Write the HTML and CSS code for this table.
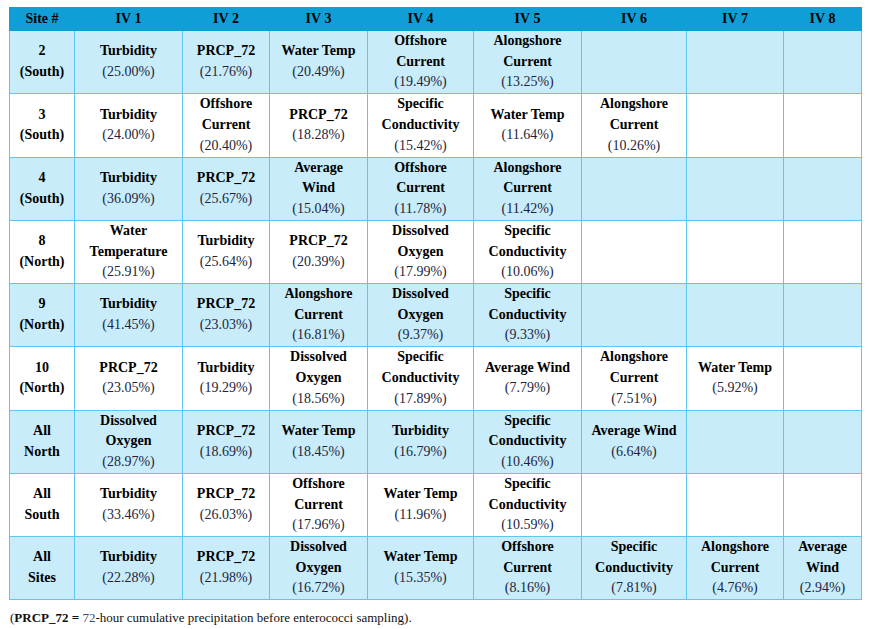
FILE: index.html
```html
<!DOCTYPE html>
<html>
<head>
<meta charset="utf-8">
<link rel="stylesheet" href="styles.css">
</head>
<body>
<table class="grid">
<colgroup>
<col class="c0"><col class="c1"><col class="c2"><col class="c3"><col class="c4"><col class="c5"><col class="c6"><col class="c7"><col class="c8">
</colgroup>
<thead>
<tr><th>Site #</th><th>IV 1</th><th>IV 2</th><th>IV 3</th><th>IV 4</th><th>IV 5</th><th>IV 6</th><th>IV 7</th><th>IV 8</th></tr>
</thead>
<tbody>
<tr class="shade">
<td><b>2<br>(South)</b></td>
<td><b>Turbidity</b><br>(25.00%)</td>
<td><b>PRCP_72</b><br>(21.76%)</td>
<td><b>Water Temp</b><br>(20.49%)</td>
<td><b>Offshore<br>Current</b><br>(19.49%)</td>
<td><b>Alongshore<br>Current</b><br>(13.25%)</td>
<td></td><td></td><td></td>
</tr>
<tr>
<td><b>3<br>(South)</b></td>
<td><b>Turbidity</b><br>(24.00%)</td>
<td><b>Offshore<br>Current</b><br>(20.40%)</td>
<td><b>PRCP_72</b><br>(18.28%)</td>
<td><b>Specific<br>Conductivity</b><br>(15.42%)</td>
<td><b>Water Temp</b><br>(11.64%)</td>
<td><b>Alongshore<br>Current</b><br>(10.26%)</td>
<td></td><td></td>
</tr>
<tr class="shade">
<td><b>4<br>(South)</b></td>
<td><b>Turbidity</b><br>(36.09%)</td>
<td><b>PRCP_72</b><br>(25.67%)</td>
<td><b>Average<br>Wind</b><br>(15.04%)</td>
<td><b>Offshore<br>Current</b><br>(11.78%)</td>
<td><b>Alongshore<br>Current</b><br>(11.42%)</td>
<td></td><td></td><td></td>
</tr>
<tr>
<td><b>8<br>(North)</b></td>
<td><b>Water<br>Temperature</b><br>(25.91%)</td>
<td><b>Turbidity</b><br>(25.64%)</td>
<td><b>PRCP_72</b><br>(20.39%)</td>
<td><b>Dissolved<br>Oxygen</b><br>(17.99%)</td>
<td><b>Specific<br>Conductivity</b><br>(10.06%)</td>
<td></td><td></td><td></td>
</tr>
<tr class="shade">
<td><b>9<br>(North)</b></td>
<td><b>Turbidity</b><br>(41.45%)</td>
<td><b>PRCP_72</b><br>(23.03%)</td>
<td><b>Alongshore<br>Current</b><br>(16.81%)</td>
<td><b>Dissolved<br>Oxygen</b><br>(9.37%)</td>
<td><b>Specific<br>Conductivity</b><br>(9.33%)</td>
<td></td><td></td><td></td>
</tr>
<tr>
<td><b>10<br>(North)</b></td>
<td><b>PRCP_72</b><br>(23.05%)</td>
<td><b>Turbidity</b><br>(19.29%)</td>
<td><b>Dissolved<br>Oxygen</b><br>(18.56%)</td>
<td><b>Specific<br>Conductivity</b><br>(17.89%)</td>
<td><b>Average Wind</b><br>(7.79%)</td>
<td><b>Alongshore<br>Current</b><br>(7.51%)</td>
<td><b>Water Temp</b><br>(5.92%)</td>
<td></td>
</tr>
<tr class="shade">
<td><b>All<br>North</b></td>
<td><b>Dissolved<br>Oxygen</b><br>(28.97%)</td>
<td><b>PRCP_72</b><br>(18.69%)</td>
<td><b>Water Temp</b><br>(18.45%)</td>
<td><b>Turbidity</b><br>(16.79%)</td>
<td><b>Specific<br>Conductivity</b><br>(10.46%)</td>
<td><b>Average Wind</b><br>(6.64%)</td>
<td></td><td></td>
</tr>
<tr>
<td><b>All<br>South</b></td>
<td><b>Turbidity</b><br>(33.46%)</td>
<td><b>PRCP_72</b><br>(26.03%)</td>
<td><b>Offshore<br>Current</b><br>(17.96%)</td>
<td><b>Water Temp</b><br>(11.96%)</td>
<td><b>Specific<br>Conductivity</b><br>(10.59%)</td>
<td></td><td></td><td></td>
</tr>
<tr class="shade">
<td><b>All<br>Sites</b></td>
<td><b>Turbidity</b><br>(22.28%)</td>
<td><b>PRCP_72</b><br>(21.98%)</td>
<td><b>Dissolved<br>Oxygen</b><br>(16.72%)</td>
<td><b>Water Temp</b><br>(15.35%)</td>
<td><b>Offshore<br>Current</b><br>(8.16%)</td>
<td><b>Specific<br>Conductivity</b><br>(7.81%)</td>
<td><b>Alongshore<br>Current</b><br>(4.76%)</td>
<td><b>Average<br>Wind</b><br>(2.94%)</td>
</tr>
</tbody>
</table>
<p class="note">(<b>PRCP_72 =</b> <span class="num">72</span>-hour cumulative precipitation before enterococci sampling).</p>
</body>
</html>
```
FILE: styles.css
```css
html, body {
  margin: 0;
  padding: 0;
  background: #ffffff;
}
body {
  padding: 7px 0 0 9px;
  font-family: "Liberation Serif", "DejaVu Serif", serif;
  color: #000000;
}
.grid {
  border-collapse: collapse;
  table-layout: fixed;
  width: 852px;
  font-size: 14px;
}
.c0 { width: 65px; }
.c1 { width: 108px; }
.c2 { width: 87px; }
.c3 { width: 98px; }
.c4 { width: 106px; }
.c5 { width: 108px; }
.c6 { width: 105px; }
.c7 { width: 97px; }
.c8 { width: 78px; }
.grid th {
  background: #0f9fd6;
  color: #000000;
  font-weight: bold;
  height: 22px;
  padding: 0;
  line-height: 20px;
  border: 1px solid #0f9fd6;
  text-align: center;
  vertical-align: middle;
}
.grid td {
  border: 1px solid #5cc7ef;
  height: 62.25px;
  padding: 0;
  line-height: 20.7px;
  text-align: center;
  vertical-align: middle;
  color: #231f40;
  white-space: nowrap;
}
.grid td b {
  color: #000000;
}
.grid tr.shade td {
  background: #c8ecfa;
}
.note {
  margin: 10px 0 0 1px;
  font-size: 13px;
  line-height: 16px;
  color: #111111;
}
.note .num {
  color: #3a4a7a;
}
```
